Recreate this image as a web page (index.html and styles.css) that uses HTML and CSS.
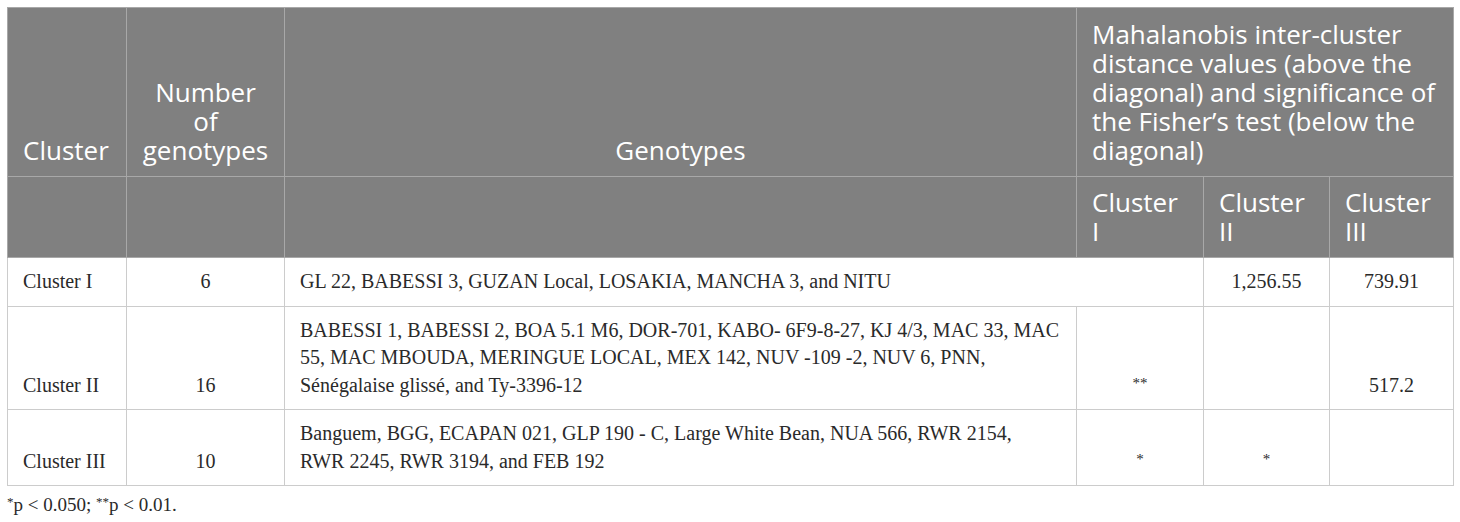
FILE: index.html
```html
<!DOCTYPE html>
<html lang="en">
<head>
<meta charset="utf-8">
<title>Cluster table</title>
<link rel="stylesheet" href="styles.css">
</head>
<body>
<div class="wrap">
<table class="data">
  <colgroup>
    <col class="c1"><col class="c2"><col class="c3"><col class="c4"><col class="c5"><col class="c6">
  </colgroup>
  <thead>
    <tr>
      <th class="left">Cluster</th>
      <th class="center">Number<br>of<br>genotypes</th>
      <th class="center">Genotypes</th>
      <th class="left" colspan="3">Mahalanobis inter-cluster distance values (above the diagonal) and significance of the Fisher’s test (below the diagonal)</th>
    </tr>
    <tr class="sub">
      <th></th>
      <th></th>
      <th></th>
      <th class="left">Cluster<br>I</th>
      <th class="left">Cluster<br>II</th>
      <th class="left">Cluster<br>III</th>
    </tr>
  </thead>
  <tbody>
    <tr>
      <td>Cluster I</td>
      <td class="center">6</td>
      <td colspan="2">GL 22, BABESSI 3, GUZAN Local, LOSAKIA, MANCHA 3, and NITU</td>
      <td class="center">1,256.55</td>
      <td class="center">739.91</td>
    </tr>
    <tr>
      <td>Cluster II</td>
      <td class="center">16</td>
      <td>BABESSI 1, BABESSI 2, BOA 5.1 M6, DOR-701, KABO- 6F9-8-27, KJ 4/3, MAC 33, MAC 55, MAC MBOUDA, MERINGUE LOCAL, MEX 142, NUV -109 -2, NUV 6, PNN, Sénégalaise glissé, and Ty-3396-12</td>
      <td class="center star">**</td>
      <td></td>
      <td class="center">517.2</td>
    </tr>
    <tr>
      <td>Cluster III</td>
      <td class="center">10</td>
      <td>Banguem, BGG, ECAPAN 021, GLP 190 - C, Large White Bean, NUA 566, RWR 2154, RWR&nbsp;2245, RWR 3194, and FEB 192</td>
      <td class="center star">*</td>
      <td class="center star">*</td>
      <td></td>
    </tr>
  </tbody>
</table>
<p class="note"><sup>*</sup>p &lt; 0.050; <sup>**</sup>p &lt; 0.01.</p>
</div>
</body>
</html>
```
FILE: styles.css
```css
html, body {
  margin: 0;
  padding: 0;
  background: #ffffff;
}
.wrap {
  padding: 7px 8px 0 7px;
}
.data {
  border-collapse: collapse;
  table-layout: fixed;
  width: 1446px;
}
.c1 { width: 119px; }
.c2 { width: 158px; }
.c3 { width: 792px; }
.c4 { width: 127px; }
.c5 { width: 126px; }
.c6 { width: 124px; }
.data th {
  background: #808080;
  color: #ffffff;
  font-family: "Open Sans", "Noto Sans", sans-serif;
  font-weight: 400;
  font-size: 26px;
  line-height: 29px;
  padding: 12px 8px 11px 15px;
  border: 1px solid #a8a8a8;
  vertical-align: bottom;
}
.data th.center {
  padding-left: 8px;
}
.data .sub th {
  vertical-align: top;
  padding-top: 11px;
  padding-bottom: 11px;
}
.data td {
  font-family: "Liberation Serif", "DejaVu Serif", serif;
  font-size: 20px;
  line-height: 27.5px;
  color: #2a2a2a;
  padding: 10px 10px 10px 15px;
  border: 1px solid #cccccc;
  vertical-align: bottom;
  text-align: left;
}
.left { text-align: left; }
.center { text-align: center; }
.data td.center { text-align: center; padding-left: 10px; }
.data td.star {
  font-size: 15px;
  padding-bottom: 12px;
}
.note {
  margin: 7px 0 0 0;
  font-family: "Liberation Serif", "DejaVu Serif", serif;
  font-size: 19px;
  line-height: 24px;
  color: #2a2a2a;
}
.note sup {
  font-size: 13px;
  vertical-align: 5px;
  line-height: 0;
}
```
